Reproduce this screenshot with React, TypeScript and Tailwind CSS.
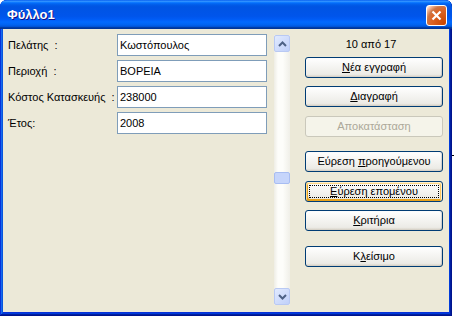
import type { ReactNode } from 'react';

const font = "font-['Liberation_Sans',Arial,sans-serif]";

const fields = [
  { label: 'Πελάτης  :', value: 'Κωστόπουλος' },
  { label: 'Περιοχή  :', value: 'ΒΟΡΕΙΑ' },
  { label: 'Κόστος Κατασκευής  :', value: '238000' },
  { label: 'Έτος:', value: '2008' },
];

function XpButton({
  children,
  className = '',
  disabled = false,
  focused = false,
}: {
  children: ReactNode;
  className?: string;
  disabled?: boolean;
  focused?: boolean;
}) {
  if (disabled) {
    return (
      <div
        className={`h-[21px] w-[138px] rounded-[3px] border border-[#cac8bb] bg-[#f5f4ea] flex items-center justify-center text-[11px] text-[#aca899] ${className}`}
      >
        {children}
      </div>
    );
  }
  return (
    <div
      className={`relative h-[21px] w-[138px] rounded-[3px] border border-[#003c74] bg-[linear-gradient(180deg,#ffffff,#ecebe6_86%,#d6d0c5)] flex items-center justify-center text-[11px] text-black ${
        focused
          ? 'shadow-[inset_-1px_1px_#fff0cf,inset_1px_2px_#fdd889,inset_-2px_2px_#fbc761,inset_2px_-2px_#e5a01a]'
          : 'shadow-[inset_-1px_0_1px_rgba(0,0,0,0.15)]'
      } ${className}`}
    >
      {focused && (
        <span className="absolute inset-[3px] border border-dotted border-black" />
      )}
      <span className="relative">{children}</span>
    </div>
  );
}

function ScrollArrow({ up }: { up?: boolean }) {
  return (
    <div className="h-[17px] w-[16px] rounded-[2px] border border-[#b9c9f3] bg-[linear-gradient(135deg,#e1eafe,#c0d0fa)] flex items-center justify-center">
      <svg width="9" height="6" viewBox="0 0 9 6">
        <path
          d={up ? 'M1 5 L4.5 1.5 L8 5' : 'M1 1 L4.5 4.5 L8 1'}
          fill="none"
          stroke="#4d6185"
          strokeWidth="2"
        />
      </svg>
    </div>
  );
}

export default function App() {
  return (
    <div className={`w-[454px] h-[316px] bg-white flex ${font}`}>
      <div className="w-[452px] h-[316px] flex flex-col rounded-t-[7px] overflow-hidden bg-[#0831d9] shadow-[inset_-1px_-1px_#00138c,inset_1px_1px_#0831d9,inset_-2px_-2px_#001ea0,inset_2px_2px_#166aee,inset_-3px_-3px_#003bda,inset_3px_3px_#0855dd]">
        <div className="h-[29px] flex items-start justify-between pl-[7px] pr-[5px] bg-[linear-gradient(180deg,#0058ee_0%,#3593ff_4%,#288eff_6%,#127dff_8%,#036ffc_10%,#0262ee_14%,#0057e5_20%,#0054e3_24%,#0055eb_56%,#005bf5_66%,#026afe_76%,#0062ef_86%,#0052d6_92%,#0040ab_94%,#003092_100%)]">
          <span className="mt-[7px] text-[13px] font-bold text-white leading-[16px] [text-shadow:1px_1px_#0f1089]">
            Φύλλο1
          </span>
          <div className="mt-[5px] h-[21px] w-[21px] rounded-[3px] border border-white bg-[radial-gradient(circle_at_90%_90%,#cc4600_0%,#dc6527_55%,#cd7546_70%,#ffccb2_90%,#fff_100%)] flex items-center justify-center">
            <svg width="11" height="11" viewBox="0 0 11 11">
              <path d="M1.5 1.5 L9.5 9.5 M9.5 1.5 L1.5 9.5" stroke="#fff" strokeWidth="2.2" />
            </svg>
          </div>
        </div>

        <div className="flex-1 mx-[3px] mb-[4px] bg-[#ece9d8] flex items-start pt-[5px] text-[11px] text-black">
          <div className="pl-[5px] flex flex-col gap-[4px]">
            {fields.map((f) => (
              <div key={f.label} className="flex items-center h-[22px]">
                <span className="w-[109px] whitespace-pre">{f.label}</span>
                <div className="h-[22px] w-[150px] border border-[#7f9db9] bg-white flex items-center pl-[2px]">
                  {f.value}
                </div>
              </div>
            ))}
          </div>

          <div className="ml-[7px] mt-[1px] h-[270px] w-[16px] flex flex-col bg-[linear-gradient(90deg,#eeede5_0%,#fdfdfa_25%,#fdfdfa_55%,#f0efe8_100%)]">
            <ScrollArrow up />
            <div className="flex-1 flex flex-col">
              <div className="h-[120px]" />
              <div className="h-[12px] w-[16px] rounded-[2px] border border-[#a8bdf2] bg-[#c6d5fb]" />
            </div>
            <ScrollArrow />
          </div>

          <div className="ml-[15px] flex flex-col">
            <div className="h-[20px] flex items-center justify-center pr-[6px]">10 από 17</div>
            <XpButton className="mt-[3px]">
              <u>Ν</u>έα εγγραφή
            </XpButton>
            <XpButton className="mt-[8px]">
              <u>Δ</u>ιαγραφή
            </XpButton>
            <XpButton className="mt-[9px]" disabled>
              Αποκατάσταση
            </XpButton>
            <XpButton className="mt-[14px]">
              Εύρεση <u>π</u>ροηγούμενου
            </XpButton>
            <XpButton className="mt-[9px]" focused>
              <u>Ε</u>ύρεση επομένου
            </XpButton>
            <XpButton className="mt-[8px]">
              <u>Κ</u>ριτήρια
            </XpButton>
            <XpButton className="mt-[15px]">
              Κ<u>λ</u>είσιμο
            </XpButton>
          </div>
        </div>
      </div>
      <div className="w-[2px] pt-[155px]">
        <div className="h-[1px] w-[2px] bg-black" />
      </div>
    </div>
  );
}
